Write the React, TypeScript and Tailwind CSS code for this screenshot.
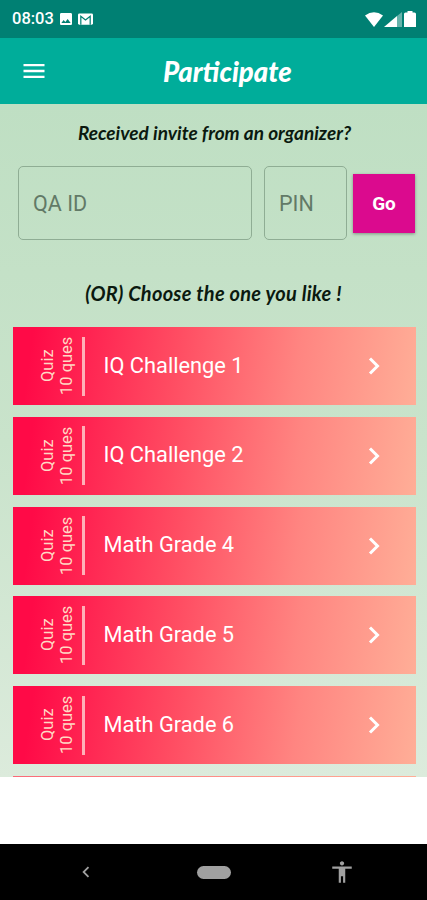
import React from 'react';
import { MdAccessibility, MdChevronLeft, MdImage, MdMenu } from 'react-icons/md';

const QUIZZES = [
  { title: 'IQ Challenge 1', count: 10 },
  { title: 'IQ Challenge 2', count: 10 },
  { title: 'Math Grade 4', count: 10 },
  { title: 'Math Grade 5', count: 10 },
  { title: 'Math Grade 6', count: 10 },
];

const StatusBar = () => (
  <div className="flex h-[38px] shrink-0 items-center bg-[#008073] pl-[12px] pr-[11px] text-white">
    <span className="w-[46px] whitespace-nowrap pt-px text-[16.5px] font-medium">08:03</span>
    <MdImage className="size-4" />
    <svg viewBox="0 0 16 12" className="ml-[4px] h-[12px] w-[15px]">
      <rect width="16" height="12" rx="1.5" fill="currentColor" />
      <path d="M3 12V3l5 4 5-4v9" fill="none" stroke="#008073" strokeWidth="1.3" />
    </svg>
    <svg viewBox="0 0 18 15" className="ml-auto h-[15px] w-[18px]">
      <path d="M0 3.5Q9-3 18 3.5L9 15z" fill="currentColor" />
    </svg>
    <svg viewBox="0 0 18 15" className="ml-px h-[15px] w-[18px]">
      <path d="M0 15 13 4v11z" fill="currentColor" />
      <path d="M13 4 18 0v15h-5z" fill="currentColor" opacity=".4" />
    </svg>
    <svg viewBox="0 0 12 16" className="ml-[2px] h-4 w-3">
      <path d="M3.5 0h5v1.5h2A1.5 1.5 0 0 1 12 3v13H0V3a1.5 1.5 0 0 1 1.5-1.5h2z" fill="currentColor" />
    </svg>
  </div>
);

const InviteForm = () => (
  <div className="flex items-center pl-[18px] pr-3">
    <input
      aria-label="QA ID"
      placeholder="QA ID"
      className="h-[74px] w-[234px] rounded-[5px] border border-[#8fad94] px-[14px] text-[21.5px] placeholder:text-[#627a67]"
    />
    <input
      aria-label="PIN"
      placeholder="PIN"
      className="ml-3 h-[74px] w-[83px] rounded-[5px] border border-[#8fad94] px-[14px] text-[21.5px] placeholder:text-[#627a67]"
    />
    <button className="ml-1.5 h-[59px] w-[62px] bg-[#db0a8e] pt-0.5 text-[19px] font-bold text-white shadow-[0_1px_3px_rgba(0,0,0,0.35)]">
      Go
    </button>
  </div>
);

interface QuizCardProps {
  title: string;
  count: number;
}

const QuizCard: React.FC<QuizCardProps> = ({ title, count }) => (
  <button className="flex h-[78px] w-full shrink-0 items-center bg-linear-[98deg,#ff0a47_5%,#ff4c62_40%,#ff8581_70%,#ffae97] pl-[24px] pr-[35px] text-left text-white">
    <span className="flex h-[60px] w-[40px] rotate-180 items-center justify-center text-center text-[16.5px] leading-[19px] text-[#ffd9c4] [writing-mode:vertical-rl]">
      Quiz
      <br />
      {count} ques
    </span>
    <span className="ml-[5px] h-[59px] w-[3px] bg-[#ffb0b8]" />
    <span className="ml-[19px] flex-1 text-[21.8px]">{title}</span>
    <svg viewBox="0 0 13 18" className="h-[18px] w-[13px]">
      <path d="M2 1.5 9.5 9 2 16.5" fill="none" stroke="currentColor" strokeWidth="3" />
    </svg>
  </button>
);

const NavBar = () => (
  <div className="flex h-[56px] shrink-0 items-center bg-black text-[#a0a0a0]">
    <MdChevronLeft className="ml-[75px] size-[22px]" />
    <span className="ml-[100px] h-[13px] w-[34px] rounded-full bg-[#a0a0a0]" />
    <MdAccessibility className="ml-[98px] size-[26px]" />
  </div>
);

const App = () => (
  <div className="flex h-[900px] w-[427px] flex-col overflow-hidden bg-white font-['Roboto',sans-serif]">
    <StatusBar />
    <header className="flex h-[66px] shrink-0 items-center bg-[#00ad9a] pl-[20px] text-white">
      <MdMenu className="size-[28px]" />
      <h1 className="ml-[115px] whitespace-nowrap pt-0.5 font-['Lato',cursive] text-[27.5px] font-black italic">Participate</h1>
    </header>
    <main className="h-[673px] shrink-0 overflow-hidden bg-linear-to-b from-[#bfdfc3] via-[#c9e3cb] to-[#dcebdc]">
      <p className="flex h-[62px] items-center justify-center whitespace-nowrap pb-1 pl-0.5 font-['Lato',cursive] text-[19px] font-bold italic text-[#0b190f]">
        Received invite from an organizer?
      </p>
      <InviteForm />
      <p className="flex h-[87px] items-center justify-center whitespace-nowrap pt-[18px] font-['Lato',cursive] text-[20px] font-bold italic tracking-[0.25px] text-[#0b190f]">
        (OR) Choose the one you like !
      </p>
      <div className="flex flex-col gap-[11.8px] pl-[12.5px] pr-[11.5px]">
        {QUIZZES.map(quiz => (
          <QuizCard key={quiz.title} title={quiz.title} count={quiz.count} />
        ))}
        {/* top edge of the next card, below the fold */}
        <div className="h-[3px] bg-linear-to-r from-[#fa6a78] to-[#ffae97]" />
      </div>
    </main>
    <div className="h-[67px] shrink-0" />
    <NavBar />
  </div>
);

export default App;
